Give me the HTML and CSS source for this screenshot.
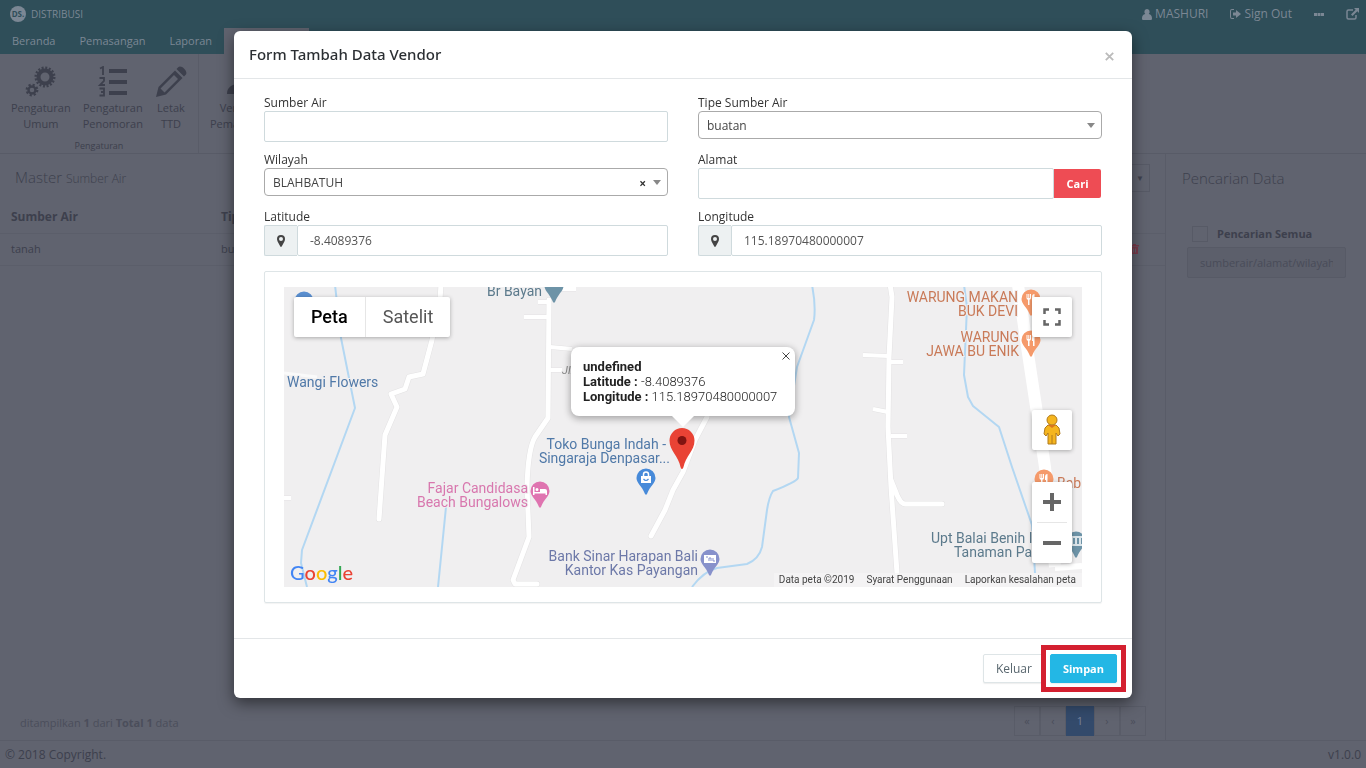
FILE: index.html
```html
<!DOCTYPE html>
<html lang="id">
<head>
<meta charset="utf-8">
<title>Distribusi - Master Sumber Air</title>
<link rel="stylesheet" href="styles.css">
</head>
<body>
<div class="app">
  <header class="topbar">
    <div class="titlebar">
      <a class="brand" href="#">
        <span class="brand-logo">DS.</span>DISTRIBUSI
      </a>
      <nav class="user-menu">
        <a href="#"><svg width="10" height="11" viewBox="0 0 10 11"><path d="M5 0a2.700 2.900 0 0 1 1.800 5C9 5.500 10 7 10 9.500c0 1-.6 1.500-1.500 1.500h-7C.6 11 0 10.500 0 9.500 0 7 1 5.500 3.200 5A2.700 2.900 0 0 1 5 0z"/></svg>MASHURI</a>
        <a href="#"><svg width="11" height="10" viewBox="0 0 11 10"><path d="M4 1H2a1 1 0 0 0-1 1v6a1 1 0 0 0 1 1h2v1H2a2 2 0 0 1-2-2V2a2 2 0 0 1 2-2h2zM3 3.500h3V1l5 4-5 4V6.500H3z"/></svg>Sign Out</a>
        <a href="#" aria-label="Lainnya"><svg width="10" height="3" viewBox="0 0 10 3"><path d="M0 0h3v3H0zM3.500 0h3v3h-3zM7 0h3v3H7z"/></svg></a>
        <a href="#" aria-label="Buka"><svg width="13" height="12" viewBox="0 0 13 12"><path d="M7 2H2.500A1.500 1.500 0 0 0 1 3.500v6A1.500 1.500 0 0 0 2.500 11h6A1.500 1.500 0 0 0 10 9.500V7" fill="none" stroke="currentColor" stroke-width="1.500"/><path d="M8 0h5v5l-1.700-1.700L6.500 8 5 6.500l4.700-4.800z"/></svg></a>
      </nav>
    </div>
    <nav class="tabs">
      <a href="#">Beranda</a><a href="#">Pemasangan</a><a href="#">Laporan</a><a class="active" href="#" aria-label="Pengaturan"></a>
    </nav>
  </header>

  <div class="ribbon">
    <section class="ribbon-group">
      <div class="ribbon-tools">
        <button type="button">
          <svg width="32" height="32" viewBox="0 0 32 32"><g fill="none" stroke="currentColor"><circle cx="20" cy="11" r="6.500" stroke-width="4"/><circle cx="20" cy="11" r="9.300" stroke-width="2.400" stroke-dasharray="2 1.650"/><circle cx="7" cy="24" r="3.500" stroke-width="2.400"/><circle cx="7" cy="24" r="5.300" stroke-width="2.200" stroke-dasharray="2.160 2"/></g></svg>
          <span>Pengaturan<br>Umum</span></button>
        <button type="button">
          <svg width="32" height="32" viewBox="0 0 32 32"><path d="M12 3h18v4H12zM12 14h18v4H12zM12 25h18v4H12z"/><path d="M3 2.500l3-1.500v8M2.500 12h4.500v3l-4 4h5M2.500 22.500H7v7H2.500M4 26h3" fill="none" stroke="currentColor" stroke-width="1.800"/></svg>
          <span>Pengaturan<br>Penomoran</span></button>
        <button type="button">
          <svg width="32" height="32" viewBox="0 0 32 32"><path fill-rule="evenodd" d="M1 31l2.500-10L20 4.500l7.500 7.500L11 28.500zM5.500 22.500l4 4L23 13l-4-4zM21.500 3l1.700-1.700c3-3 10.500 4.500 7.500 7.500L29 10.500z"/></svg>
          <span>Letak<br>TTD</span></button>
      </div>
      <p class="ribbon-title">Pengaturan</p>
    </section>
    <section class="ribbon-group">
      <div class="ribbon-tools">
        <button type="button">
          <svg width="32" height="32" viewBox="0 0 32 32"><path d="M0 28c0-6 4-9 9-10a8 8 0 1 1 14 0c5 1 9 4 9 10z"/></svg>
          <span>Verifikasi<br>Pemasangan</span></button>
      </div>
    </section>
  </div>

  <div class="workspace">
    <main class="master">
      <div class="master-head">
        <h1>Master <small>Sumber Air</small></h1>
        <button type="button" class="drop" aria-label="Pilihan">▼</button>
      </div>
      <table class="grid">
        <thead><tr><th>Sumber Air</th><th>Tipe</th><th></th></tr></thead>
        <tbody><tr><td>tanah</td><td>buatan</td><td class="act"><svg width="9" height="10" viewBox="0 0 9 10"><path d="M0 1h3V0h3v1h3v1.500H0zM1 3h7v7H1zM3 4.500v4h1v-4zM5 4.500v4h1v-4z" fill-rule="evenodd"/></svg></td></tr></tbody>
      </table>
      <div class="pager-row">
        <p>ditampilkan <b>1</b> dari <b>Total 1</b> data</p>
        <nav class="pager"><a href="#">«</a><a href="#">‹</a><a class="current" href="#">1</a><a href="#">›</a><a href="#">»</a></nav>
      </div>
    </main>
    <aside class="search">
      <h2>Pencarian Data</h2>
      <label class="check"><input type="checkbox">Pencarian Semua</label>
      <input class="search-box" type="text" aria-label="Cari sumber air" placeholder="sumberair/alamat/wilayah">
    </aside>
  </div>
  <footer class="copyright"><span>© 2018 Copyright.</span><span>v1.0.0</span></footer>
</div>

<div class="backdrop">
  <form class="modal" role="dialog" aria-labelledby="form-title">
    <header class="modal-head">
      <h2 id="form-title">Form Tambah Data Vendor</h2>
      <button type="button" class="close" aria-label="Tutup"><svg width="9" height="9" viewBox="0 0 9 9"><path d="M.8.8l7.400 7.400M8.200.8L.8 8.200" stroke="currentColor" stroke-width="1.800"/></svg></button>
    </header>
    <div class="modal-body">
      <div class="fields">
        <div class="field"><label for="sumber">Sumber Air</label><input class="control" id="sumber" type="text"></div>
        <div class="field"><label for="tipe">Tipe Sumber Air</label>
          <div class="picker"><select id="tipe"><option>buatan</option></select></div></div>
        <div class="field"><label for="wilayah">Wilayah</label>
          <div class="picker"><select id="wilayah"><option>BLAHBATUH</option></select><button type="button" class="clear" aria-label="Hapus pilihan">×</button></div></div>
        <div class="field"><label for="alamat">Alamat</label>
          <div class="group"><input class="control" id="alamat" type="text"><button type="button" class="find">Cari</button></div></div>
        <div class="field"><label for="lat">Latitude</label>
          <div class="group"><span class="addon"><svg width="8" height="12" viewBox="0 0 8 12"><path fill-rule="evenodd" d="M4 0a4 4 0 0 1 4 4c0 1-.2 1.600-.6 2.400L4.700 11.600q-.7.800-1.400 0L.6 6.400Q0 5 0 4a4 4 0 0 1 4-4zm0 2a2 2 0 1 0 0 4 2 2 0 0 0 0-4z"/></svg></span><input class="control" id="lat" type="text" value="-8.4089376"></div></div>
        <div class="field"><label for="lng">Longitude</label>
          <div class="group"><span class="addon"><svg width="8" height="12" viewBox="0 0 8 12"><path fill-rule="evenodd" d="M4 0a4 4 0 0 1 4 4c0 1-.2 1.600-.6 2.400L4.700 11.600q-.7.800-1.400 0L.6 6.400Q0 5 0 4a4 4 0 0 1 4-4zm0 2a2 2 0 1 0 0 4 2 2 0 0 0 0-4z"/></svg></span><input class="control" id="lng" type="text" value="115.18970480000007"></div></div>
      </div>

      <div class="panel">
        <div class="map">
          <svg class="map-canvas" viewBox="0 0 798 300" preserveAspectRatio="xMidYMid slice" role="img" aria-label="Peta lokasi">
            <defs>
              <path id="poi" d="M0-9.500A9.500 9.500 0 0 1 9.500 0C9.500 5 4 8 1 16Q0 17.500-1 16C-4 8-9.500 5-9.500 0A9.500 9.500 0 0 1 0-9.500z"/>
              <path id="fork" d="M-4.500-5v4q0 1.500 1.500 1.700V6h1.500V.7Q0 .5 0-1v-4h-1v4h-.7v-4h-1v4h-.8v-4zM2 6V1H1v-3q0-3 2.500-3V6z"/>
              <g id="routes" fill="none" stroke-linecap="round" stroke-linejoin="round">
                <path d="M157-3l-1 16-8 40-9 34-14 3-4 12-14 5 6 13-12 28-6 84"/>
                <path d="M265 13l-1 118-13 19q-7 12-8 50l2 50-16 43 2 4h22"/>
                <path d="M423 130l-12 23-12 32-10 18-8 20-14 26"/>
                <path d="M606-3l2 13-3 60-1 70 3 60 6 86M607 193l6 15q4 9 8 9h37"/>
              </g>
              <g id="lanes" fill="none" stroke-linecap="butt">
                <path d="M254 15h11M240 30h25M266 60l22 2M266 83h12M269 2h23M0 211h7M579 68l26 1M619 75h-14M589 122l15 3M623 149h-16"/>
              </g>
            </defs>
            <rect width="798" height="300" fill="#f0eff0"/>
            <g fill="none" stroke="#b3d7f2" stroke-width="2" stroke-linejoin="round">
              <path d="M51-2l6 53 14 70-53 142-1 13 6 24M162 220l-8 80M528-2q4 20 2 35l-17 47-8 50 10 36-1 25q-2 4-25 13-4 6-6 19l-5 37q-3 12-15 17l-30 4q-14 4-25 19M680-2l3 22-3 68 4 22 5 9 26 21 13 40 20 58 3 48"/>
            </g>
            <use href="#routes" stroke="#e3e2e3" stroke-width="6"/><use href="#lanes" stroke="#e3e2e3" stroke-width="5"/>
            <path d="M734-2l9 62 10 66 8 54 10 100" fill="none" stroke="#fff" stroke-width="12"/>
            <path d="M771 281l27-2" stroke="#fff" stroke-width="6"/>
            <use href="#routes" stroke="#fff" stroke-width="5"/><use href="#lanes" stroke="#fff" stroke-width="4"/>
            <path d="M0 86l33 4" stroke="#fafafa" stroke-width="3"/>
            <g class="places">
              <use href="#poi" x="20" y="14" fill="#5a8fd0"/>
              <use href="#poi" x="270" y="-1" fill="#6d93a7"/>
              <use href="#poi" x="256" y="204" fill="#df74b0"/>
              <path d="M249 200v8h1.500v-1.500h11v1.500h1.500v-4q0-2-2-2h-5v3h-5.500v-5zM251.500 202.500a1.500 1.500 0 1 0 3 0 1.500 1.500 0 0 0-3 0" fill="#fff"/>
              <use href="#poi" x="362" y="191" fill="#478ad9"/>
              <path d="M357 189h10v7h-10z" fill="#fff"/><path d="M359.500 189v-1.500a2.500 2.500 0 0 1 5 0v1.500" fill="none" stroke="#fff" stroke-width="1.500"/><path d="M359.500 192q2.500 3 5 0" fill="none" stroke="#478ad9" stroke-width="1.200"/>
              <use href="#poi" x="426" y="272" fill="#8791cb"/>
              <path d="M420 268h12v8h-12z" fill="#fff"/><path d="M422 270h2M425 274v-3h2v3M429 271v3h2" stroke="#8791cb" fill="none"/>
              <g fill="#f59a6b"><use href="#poi" x="747" y="12"/><use href="#poi" x="747" y="53"/><use href="#poi" x="760" y="192"/></g>
              <g fill="#fff"><use href="#fork" x="747" y="12"/><use href="#fork" x="747" y="53"/><use href="#fork" x="760" y="192"/></g>
              <use href="#poi" x="792" y="254" fill="#6d93a7"/>
              <path d="M786 250h12M788 251v6M792 251v6M796 251v6M786 258h12" stroke="#fff" stroke-width="1.500"/>
              <text x="3" y="100" class="shop">Wangi Flowers</text>
              <text x="258" y="9" class="civic end">Br Bayan</text>
              <text x="278" y="87" class="street">Jl.</text>
              <g class="hotel end"><text x="244" y="206">Fajar Candidasa</text><text x="244" y="220">Beach Bungalows</text></g>
              <g class="shop end"><text x="382" y="162">Toko Bunga Indah -</text><text x="386" y="176">Singaraja Denpasar...</text></g>
              <g class="bank end"><text x="414" y="274">Bank Sinar Harapan Bali</text><text x="414" y="288">Kantor Kas Payangan</text></g>
              <g class="food end"><text x="734" y="15">WARUNG MAKAN</text><text x="734" y="29">BUK DEVI</text><text x="735" y="55">WARUNG</text><text x="735" y="69">JAWA BU ENIK</text></g>
              <text x="773" y="201" class="food">Bab</text>
              <g class="civic"><text x="647" y="256">Upt Balai Benih I</text><text x="670" y="270">Tanaman Pa</text></g>
            </g>
            <path d="M398 182q-1 0-1.500-2c-2-11-11-16-11-26.500a12.500 12.500 0 0 1 25 0c0 10.500-9 15.500-11 26.500q-.5 2-1.500 2z" fill="#e94335"/><circle cx="398" cy="153.500" r="4.500" fill="#811411"/>
          </svg>
          <div class="map-type"><button type="button" class="on">Peta</button><button type="button">Satelit</button></div>
          <div class="bubble">
            <b>undefined</b><br><b>Latitude :</b> -8.4089376<br><b>Longitude :</b> 115.18970480000007
            <button type="button" aria-label="Tutup info"><svg width="8" height="8" viewBox="0 0 8 8"><path d="M.5.5l7 7M7.500.5l-7 7" stroke="#444" stroke-width="1"/></svg></button>
          </div>
          <button type="button" class="tool full" aria-label="Layar penuh"><svg width="18" height="18" viewBox="0 0 18 18"><path d="M1.500 6V1.500H6M12 1.500h4.500V6M16.500 12v4.500H12M6 16.500H1.500V12" fill="none" stroke="#666" stroke-width="2.500"/></svg></button>
          <button type="button" class="tool pegman" aria-label="Street View"><svg width="18" height="32" viewBox="0 0 18 32"><g fill="#f5b51e" stroke="#b07a1c"><path d="M5 11h8l3 3 1 6-2 2-2-3v11H5V19l-2 3-2-2 1-6z"/><path d="M9 21v9" /><circle cx="9" cy="6" r="5"/></g><path d="M5 11h8l-4 3z" fill="#d9741d"/></svg></button>
          <div class="zoom"><button type="button" aria-label="Perbesar"><svg width="18" height="18" viewBox="0 0 18 18"><path d="M7 0h4v7h7v4h-7v7H7v-7H0V7h7z" fill="#666"/></svg></button><button type="button" aria-label="Perkecil"><svg width="18" height="4" viewBox="0 0 18 4"><path d="M0 0h18v4H0z" fill="#666"/></svg></button></div>
          <a class="google" href="#"><span class="blue">G</span><span class="red">o</span><span class="yellow">o</span><span class="blue">g</span><span class="green">l</span><span class="red">e</span></a>
          <div class="credits"><span>Data peta ©2019</span><a href="#">Syarat Penggunaan</a><a href="#">Laporkan kesalahan peta</a></div>
        </div>
      </div>
    </div>
    <footer class="modal-foot"><button type="button" class="btn">Keluar</button><span class="highlight"><button type="submit" class="btn save">Simpan</button></span></footer>
  </form>
</div>
</body>
</html>
```
FILE: styles.css
```css
* { box-sizing: border-box; }
body { margin: 0; font: 12px/16px "Open Sans", "Noto Sans", sans-serif; color: #333; background: #60636f; }
h1, h2, p { margin: 0; font-weight: 400; }
a { color: inherit; text-decoration: none; }
button, input, select { font: inherit; color: inherit; margin: 0; }
button { padding: 0; border: 0; background: none; cursor: pointer; }
svg { fill: currentColor; flex: none; display: block; }

.app { min-height: 100vh; display: flex; flex-direction: column; color: #3d404d; }
.topbar { background: #2f4e59; color: #7b8794; }
.titlebar { height: 28px; padding: 0 7px 0 10px; display: flex; justify-content: space-between; align-items: center; }
.brand { display: flex; align-items: center; gap: 5px; font-size: 10px; }
.brand-logo { width: 16px; height: 16px; border-radius: 50%; background: #7b8794; color: #2f4e59; font-size: 8px; font-weight: 700; line-height: 16px; text-align: center; }
.user-menu { display: flex; gap: 22px; }
.user-menu a { display: flex; align-items: center; gap: 3px; }
.tabs { height: 26px; display: flex; line-height: 26px; font-size: 11px; }
.tabs a { padding: 0 12px; }
.tabs .active { width: 85px; background: #60636f; }

.ribbon { height: 100px; display: flex; border-bottom: 1px solid #585b67; }
.ribbon-group { padding: 12px 11px 0; border-right: 1px solid #595c68; display: flex; flex-direction: column; align-items: center; font-size: 11px; }
.ribbon-tools { display: flex; gap: 12px; }
.ribbon-tools button { display: flex; flex-direction: column; align-items: center; gap: 2px; }
.ribbon-title { margin-top: 6px; font-size: 9px; }

.workspace { flex: 1; display: flex; }
.master { flex: 1; display: flex; flex-direction: column; border-right: 1px solid #595c68; }
.master-head { display: flex; justify-content: space-between; align-items: center; padding: 9px 15px 0; }
.master-head h1 { font-size: 15px; font-weight: 300; line-height: 28px; }
.master-head small { font-size: 12px; }
.drop { width: 32px; height: 28px; border: 1px solid #575a66; font-size: 8px; padding-left: 12px; }
.grid { border-collapse: collapse; width: 100%; margin-top: 8px; }
.grid th, .grid td { height: 32px; padding: 0 11px; text-align: left; }
.grid th:first-child { width: 210px; }
.grid td { font-size: 11px; border-top: 1px solid #5b5e6a; border-bottom: 1px solid #5b5e6a; }
.grid .act { width: 46px; color: #7b3c4c; }
.pager-row { margin-top: auto; display: flex; justify-content: space-between; align-items: center; padding: 0 19px 4px 20px; font-size: 11px; color: #4b4e5b; }
.pager-row p { padding-top: 4px; }
.pager { display: flex; }
.pager a { width: 26px; line-height: 28px; border: 1px solid #595c68; text-align: center; }
.pager .current { width: 28px; background: #334a6b; border-color: #334a6b; color: #78839b; }
.search { width: 200px; padding: 8px 20px 0 16px; display: flex; flex-direction: column; }
.search h2 { font-size: 15px; font-weight: 300; line-height: 32px; }
.check { margin: 32px 0 5px 10px; display: flex; align-items: center; gap: 9px; font-weight: 700; font-size: 11px; }
.check input { appearance: none; width: 16px; height: 16px; margin: 0; border: 1px solid #575a66; }
.search-box { margin: 0 0 0 5px; height: 31px; padding: 0 12px; border: 1px solid #575a66; background: #5c5f6b; border-radius: 2px; font-size: 11px; }
.search-box::placeholder { color: #494c59; opacity: 1; }
.copyright { border-top: 1px solid #595c68; padding: 6px 5px 5px; display: flex; justify-content: space-between; }

.backdrop { position: fixed; inset: 0; overflow: auto; padding: 31px 16px; }
.modal { max-width: 898px; margin: 0 auto; background: #fff; border-radius: 6px; box-shadow: 0 5px 15px rgba(0, 0, 0, .5); }
.modal-head { display: flex; justify-content: space-between; align-items: center; padding: 0 18px 0 15px; border-bottom: 1px solid #e3e6e8; }
.modal-head h2 { font: 500 15px/47px "Noto Sans", sans-serif; color: #2b2f33; }
.close { color: #bbb; padding-top: 3px; }
.modal-body { padding: 16px 30px 35px; }
.fields { display: grid; grid-template-columns: 1fr 1fr; column-gap: 30px; row-gap: 10px; }
.field { display: flex; flex-direction: column; height: 47px; }
.control { width: 100%; min-width: 0; height: 31px; border: 1px solid #cfdadd; border-radius: 2px; padding: 0 12px; background: #fff; color: #555; font-size: 12px; outline: 0; }
.group { display: flex; }
.addon { width: 33px; flex: none; display: grid; place-items: center; background: #edf1f2; border: 1px solid #cfdadd; border-right: 0; border-radius: 2px 0 0 2px; color: #444; }
.find { flex: none; width: 47px; height: 29px; margin: 1px 1px 0 0; background: #ee4c54; color: #fff; font-weight: 700; font-size: 11px; border-radius: 0 2px 2px 0; }
.picker { position: relative; height: 28px; }
.picker select { appearance: none; width: 100%; height: 28px; border: 1px solid #aaa; border-radius: 4px; padding: 2px 24px 0 8px; background: #fff; color: #444; }
.picker::after { content: ""; position: absolute; right: 7px; top: 12px; border: 4px solid transparent; border-top: 5px solid #888; border-bottom: 0; }
.clear { position: absolute; right: 22px; top: 8px; font-weight: 700; color: #333; }

.panel { margin-top: 15px; padding: 15px 19px; border: 1px solid #dee5e7; border-radius: 2px; box-shadow: 0 1px 1px rgba(0, 0, 0, .05); }
.map { position: relative; height: 300px; overflow: hidden; font-family: Roboto, sans-serif; }
.map-canvas { width: 100%; height: 100%; }
.places text { font-size: 14px; stroke: #f0eff0; stroke-width: 2px; paint-order: stroke; }
.end { text-anchor: end; }
.places .street { font-size: 11px; font-style: italic; fill: #888; }
.shop { fill: #5079a8; }
.civic { fill: #5c7a8c; }
.hotel { fill: #d877ae; }
.bank { fill: #6c78a8; }
.food { fill: #c97a58; }
.map-type, .tool, .zoom { position: absolute; background: #fff; border-radius: 2px; box-shadow: 0 1px 4px rgba(0, 0, 0, .3); }
.map-type { left: 10px; top: 10px; display: flex; font-size: 18px; color: #565656; }
.map-type button { height: 40px; padding: 0 17px; }
.map-type .on { color: #000; font-weight: 500; border-right: 1px solid #e6e6e6; }
.tool { right: 10px; width: 40px; height: 40px; display: grid; place-items: center; }
.full { top: 10px; }
.pegman { bottom: 137px; }
.zoom { right: 10px; bottom: 24px; width: 40px; }
.zoom button { width: 40px; height: 40px; display: grid; place-items: center; }
.zoom button + button { height: 41px; background: linear-gradient(#e6e6e6, #e6e6e6) center top / 30px 1px no-repeat; }
.bubble { position: absolute; left: calc(50% - 112px); top: 60px; width: 224px; height: 69px; padding: 12px; border-radius: 8px; background: #fff; box-shadow: 0 2px 7px 1px rgba(0, 0, 0, .3); font-size: 13px; line-height: 15px; font-weight: 300; color: #222; }
.bubble b { font-weight: 700; }
.bubble::after { content: ""; position: absolute; left: 101px; top: 69px; border: 11px solid transparent; border-top-color: #fff; border-bottom: 0; }
.bubble button { position: absolute; right: 5px; top: 5px; }
.google { position: absolute; left: 6px; bottom: 3px; font: 500 20px/24px Lato, sans-serif; }
.blue { color: #4285f4; }
.red { color: #ea4335; }
.yellow { color: #fbbc05; }
.green { color: #34a853; }
.credits { position: absolute; right: 0; bottom: 0; display: flex; gap: 12px; padding: 0 6px 0 5px; font-size: 10px; line-height: 14px; color: #444; background: rgba(245, 245, 245, .7); }

.modal-foot { display: flex; justify-content: flex-end; gap: 5px; padding: 15px; border-top: 1px solid #e3e6e8; }
.btn { display: block; height: 29px; padding: 0 12px; border: 1px solid #dee5e7; border-radius: 2px; background: #fff; font-weight: 500; color: #58666e; box-shadow: 0 1px 1px rgba(90, 90, 90, .1); }
.highlight { margin: -9px; padding: 4px; border: 5px solid #d42030; background: #fff; }
.save { background: #23b7e5; border-color: #23b7e5; color: #fff; font-size: 11px; font-weight: 700; }
```
